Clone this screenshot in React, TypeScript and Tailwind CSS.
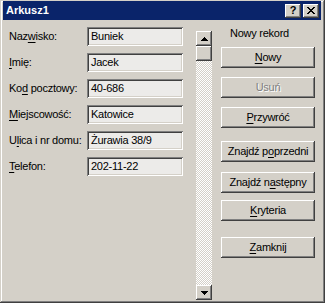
import React from "react";

const raised =
  "shadow-[inset_-1px_-1px_0_#404040,inset_1px_1px_0_#ffffff,inset_-2px_-2px_0_#808080,inset_2px_2px_0_#d4d0c8]";
const sunken =
  "shadow-[inset_1px_1px_0_#808080,inset_-1px_-1px_0_#ffffff,inset_2px_2px_0_#404040,inset_-2px_-2px_0_#d4d0c8]";

function U({ children }: { children: React.ReactNode }) {
  return <span className="underline underline-offset-[2px]">{children}</span>;
}

const fields: { label: React.ReactNode; value: string }[] = [
  { label: <>Naz<U>w</U>isko:</>, value: "Buniek" },
  { label: <><U>I</U>mię:</>, value: "Jacek" },
  { label: <>Ko<U>d</U> pocztowy:</>, value: "40-686" },
  { label: <><U>M</U>iejscowość:</>, value: "Katowice" },
  { label: <>U<U>l</U>ica i nr domu:</>, value: "Żurawia 38/9" },
  { label: <><U>T</U>elefon:</>, value: "202-11-22" },
];

function Btn({
  children,
  className = "",
  disabled = false,
}: {
  children: React.ReactNode;
  className?: string;
  disabled?: boolean;
}) {
  return (
    <div
      className={`h-[21px] w-[94px] flex items-center justify-center bg-[#d4d0c8] ${raised} ${
        disabled ? "text-[#808080] [text-shadow:1px_1px_0_#ffffff]" : "text-black"
      } ${className}`}
    >
      {children}
    </div>
  );
}

export default function App() {
  return (
    <div
      className="w-[325px] h-[303px] bg-[#d4d0c8] pt-[1px] pl-[3px] pr-[4px] pb-[2px] flex flex-col text-[11px] leading-[13px] tracking-[-0.25px] text-black shadow-[inset_-1px_-1px_0_#404040,inset_1px_1px_0_#d4d0c8,inset_-2px_-2px_0_#808080,inset_2px_2px_0_#ffffff]"
      style={{ fontFamily: '"Liberation Sans", Arial, sans-serif' }}
    >
      {/* Title bar */}
      <div className="h-[19px] bg-[#0a246a] flex items-center pl-[3px] pr-[2px] shrink-0">
        <span className="text-white font-bold text-[11px] tracking-normal">Arkusz1</span>
        <div className="ml-auto flex items-center gap-[2px]">
          <div className={`w-[16px] h-[14px] bg-[#d4d0c8] ${raised} flex items-center justify-center font-bold text-[11px] leading-none pb-[1px]`}>
            ?
          </div>
          <div className={`w-[16px] h-[14px] bg-[#d4d0c8] ${raised} flex items-center justify-center`}>
            <svg width="8" height="7" viewBox="0 0 8 7" shapeRendering="crispEdges">
              <path
                d="M0 0h2v1H0zM6 0h2v1H6zM1 1h2v1H1zM5 1h2v1H5zM2 2h4v1H2zM3 3h2v1H3zM2 4h4v1H2zM1 5h2v1H1zM5 5h2v1H5zM0 6h2v1H0zM6 6h2v1H6z"
                fill="#000"
              />
            </svg>
          </div>
        </div>
      </div>

      {/* Body */}
      <div className="flex flex-1 min-h-0">
        {/* Fields */}
        <div className="flex flex-col gap-[7px] pt-[7px] pl-[6px] w-[180px] shrink-0">
          {fields.map((f, i) => (
            <div key={i} className="flex items-center h-[19px]">
              <div className="w-[78px] shrink-0 whitespace-nowrap">{f.label}</div>
              <div className={`w-[96px] h-[19px] bg-[#ecebe9] ${sunken} flex items-center pl-[4px] whitespace-nowrap`}>
                {f.value}
              </div>
            </div>
          ))}
        </div>

        {/* Scrollbar */}
        <div className="ml-[13px] mt-[11px] w-[16px] h-[269px] flex flex-col shrink-0 [background-image:repeating-conic-gradient(#ffffff_0_25%,#d4d0c8_0_50%)] [background-size:2px_2px]">
          <div className={`h-[15px] bg-[#d4d0c8] ${raised} flex items-center justify-center`}>
            <svg width="7" height="4" viewBox="0 0 7 4" shapeRendering="crispEdges">
              <path d="M3 0h1v1H3zM2 1h3v1H2zM1 2h5v1H1zM0 3h7v1H0z" fill="#000" />
            </svg>
          </div>
          <div className={`h-[15px] bg-[#d4d0c8] ${raised}`} />
          <div className="flex-1" />
          <div className={`h-[15px] bg-[#d4d0c8] ${raised} flex items-center justify-center`}>
            <svg width="7" height="4" viewBox="0 0 7 4" shapeRendering="crispEdges">
              <path d="M0 0h7v1H0zM1 1h5v1H1zM2 2h3v1H2zM3 3h1v1H3z" fill="#000" />
            </svg>
          </div>
        </div>

        {/* Buttons */}
        <div className="ml-[9px] pt-[6px] flex flex-col w-[94px] shrink-0">
          <div className="h-[14px] pl-[9px] whitespace-nowrap flex items-center">Nowy rekord</div>
          <Btn className="mt-[7px]">
            <U>N</U>owy
          </Btn>
          <Btn className="mt-[9px]" disabled>
            Usuń
          </Btn>
          <Btn className="mt-[9px]">
            <U>P</U>rzywróć
          </Btn>
          <Btn className="mt-[13px]">
            <span>Znajdź p<U>o</U>przedni</span>
          </Btn>
          <Btn className="mt-[10px]">
            <span>Znajdź n<U>a</U>stępny</span>
          </Btn>
          <Btn className="mt-[7px]">
            <U>K</U>ryteria
          </Btn>
          <Btn className="mt-[16px]">
            <U>Z</U>amknij
          </Btn>
        </div>
      </div>
    </div>
  );
}
